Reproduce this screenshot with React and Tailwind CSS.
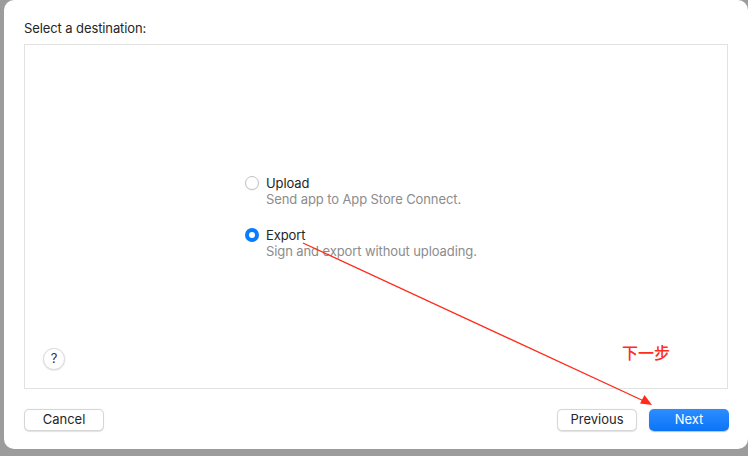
const font = { fontFamily: "Inter, 'Noto Sans CJK SC', sans-serif" };

const Radio = ({ checked }) =>
  checked ? (
    <span className="w-[14px] h-[14px] rounded-full bg-[#0a7cff] flex items-center justify-center shrink-0">
      <span className="w-[6px] h-[6px] rounded-full bg-white" />
    </span>
  ) : (
    <span className="w-[14px] h-[14px] rounded-full bg-white border border-[#c4c4c4] shadow-[0_0.5px_1px_rgba(0,0,0,0.1)] shrink-0" />
  );

const Option = ({ checked, title, desc }) => (
  <div className="flex flex-col tracking-[-0.1px]">
    <div className="flex items-center gap-[7px]">
      <Radio checked={checked} />
      <span className="text-[13px] leading-[16px] text-[#262626]">{title}</span>
    </div>
    <span className="pl-[21px] text-[13px] leading-[16px] text-[#8c8c8c]">{desc}</span>
  </div>
);

const Button = ({ children, primary }) => (
  <button
    className={
      primary
        ? "w-[80px] h-[22px] rounded-[5px] text-[13px] text-white bg-gradient-to-b from-[#2b8dff] to-[#0a74f7] shadow-[0_0.5px_1px_rgba(0,0,0,0.25)]"
        : "w-[80px] h-[22px] rounded-[5px] text-[13px] text-[#262626] bg-white border border-[#d6d6d6] shadow-[0_0.5px_1px_rgba(0,0,0,0.12)]"
    }
  >
    {children}
  </button>
);

export default function App() {
  return (
    <div className="relative w-[748px] h-[456px] bg-[#9c9c9c] overflow-hidden" style={font}>
      <div className="ml-[4px] w-[744px] h-[449px] bg-white rounded-[10px] flex flex-col pl-[20px] pr-[19px] pt-[20px]">
        <div className="text-[13px] leading-[16px] text-[#262626] h-[24px] tracking-[-0.1px]">Select a destination:</div>
        <div className="relative h-[345px] mr-[1px] border border-[#e2e2e2] bg-white">
          <div className="pl-[220px] pt-[130px] flex flex-col gap-[20px]">
            <Option title="Upload" desc="Send app to App Store Connect." />
            <Option checked title="Export" desc="Sign and export without uploading." />
          </div>
          <button className="absolute left-[18px] bottom-[18px] w-[22px] h-[22px] rounded-full bg-white border border-[#dcdcdc] shadow-[0_0.5px_1.5px_rgba(0,0,0,0.15)] text-[13px] text-[#333] flex items-center justify-center">
            ?
          </button>
          <span className="absolute left-[597px] top-[299px] text-[16px] leading-[18px] font-medium text-[#ff2d1c]">下一步</span>
        </div>
        <div className="flex items-center mt-[20px]">
          <Button>Cancel</Button>
          <div className="ml-auto flex gap-[12px]">
            <Button>Previous</Button>
            <Button primary>Next</Button>
          </div>
        </div>
      </div>
      <svg className="absolute left-0 top-0 pointer-events-none" width="748" height="456">
        <line x1="303" y1="243" x2="646" y2="402" stroke="#ff2a1a" strokeWidth="1.3" />
        <polygon points="652,405 640,403.5 644.5,395" fill="#ff2a1a" />
      </svg>
    </div>
  );
}
